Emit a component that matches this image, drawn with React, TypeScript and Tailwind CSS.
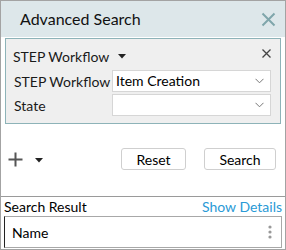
import React from 'react'

const font = { fontFamily: 'Lato, "Liberation Sans", sans-serif' }

function Caret() {
  return (
    <svg width="8" height="5" viewBox="0 0 8 5" className="shrink-0">
      <path d="M0 0 L8 0 L4 4.5 Z" fill="#222" />
    </svg>
  )
}

function Chevron() {
  return (
    <svg width="9" height="6" viewBox="0 0 9 6" className="shrink-0">
      <path d="M0.5 0.8 L4.5 4.8 L8.5 0.8" fill="none" stroke="#777" strokeWidth="1" />
    </svg>
  )
}

function SelectBox({ value }: { value?: string }) {
  return (
    <div className="flex h-[22px] w-[159px] shrink-0 items-center justify-between border border-[#d6d6d6] bg-white pl-[3px] pr-[6px] text-[14px] text-black">
      <span className="leading-none">{value ?? ''}</span>
      <Chevron />
    </div>
  )
}

export default function App() {
  return (
    <div style={font} className="flex h-[250px] w-[286px] flex-col border border-[#a3a3a3] bg-white text-[#1a1a1a]">
      {/* header */}
      <div className="flex h-[36px] shrink-0 items-center justify-between bg-[#dde7ea] pl-[19px] pr-[9px]">
        <span className="text-[16px] text-[#111]">Advanced Search</span>
        <svg width="15" height="15" viewBox="0 0 15 15">
          <path d="M1.5 1.5 L13.5 13.5 M13.5 1.5 L1.5 13.5" stroke="#7fa6ab" strokeWidth="2" />
        </svg>
      </div>

      {/* workflow panel */}
      <div className="mx-[4px] mt-[1px] flex h-[86px] shrink-0 flex-col border border-[#8db3b8] bg-[#efefef] pl-[7px] pr-[8px]">
        <div className="flex h-[30px] items-center justify-between pt-[4px]">
          <div className="flex items-center gap-[9px] whitespace-nowrap text-[14px]">
            <span>STEP Workflow</span>
            <Caret />
          </div>
          <svg width="9" height="9" viewBox="0 0 9 9" className="mb-[6px] mr-[1px]">
            <path d="M0.5 0.5 L8.5 8.5 M8.5 0.5 L0.5 8.5" stroke="#444" strokeWidth="1.3" />
          </svg>
        </div>
        <div className="flex items-center pt-[1px]">
          <span className="w-[99px] shrink-0 whitespace-nowrap pl-[1px] text-[14px]">STEP Workflow</span>
          <SelectBox value="Item Creation" />
        </div>
        <div className="mt-[2px] flex items-center">
          <span className="w-[99px] shrink-0 whitespace-nowrap pl-[1px] text-[14px]">State</span>
          <SelectBox />
        </div>
      </div>

      {/* actions */}
      <div className="mt-[24px] flex h-[22px] shrink-0 items-center pl-[7px] pr-[9px]">
        <svg width="15" height="15" viewBox="0 0 15 15">
          <path d="M7.5 0.5 V14.5 M0.5 7.5 H14.5" stroke="#555" strokeWidth="2" />
        </svg>
        <span className="ml-[12px] mt-[2px]">
          <Caret />
        </span>
        <div className="ml-auto flex gap-[18px]">
          <button className="h-[22px] w-[65px] rounded-[3px] border border-[#cfcfcf] bg-white text-[14px] text-black">Reset</button>
          <button className="h-[22px] w-[72px] rounded-[3px] border border-[#cfcfcf] bg-white text-[14px] text-black">Search</button>
        </div>
      </div>

      {/* results */}
      <div className="mt-[26px] flex flex-1 flex-col border-t border-[#9a9a9a] pr-[3px] pl-[3px]">
        <div className="flex h-[19px] items-center justify-between text-[14px]">
          <span className="text-black">Search Result</span>
          <span className="text-[#2a9ad6]">Show Details</span>
        </div>
        <div className="mb-[1px] flex flex-1 items-center justify-between border border-l-[#222] border-[#a8a8a8] pl-[7px] pr-[9px]">
          <span className="text-[14px] text-black">Name</span>
          <svg width="4" height="14" viewBox="0 0 4 14">
            <circle cx="2" cy="2" r="1.6" fill="#999" />
            <circle cx="2" cy="7" r="1.6" fill="#999" />
            <circle cx="2" cy="12" r="1.6" fill="#999" />
          </svg>
        </div>
      </div>
    </div>
  )
}
